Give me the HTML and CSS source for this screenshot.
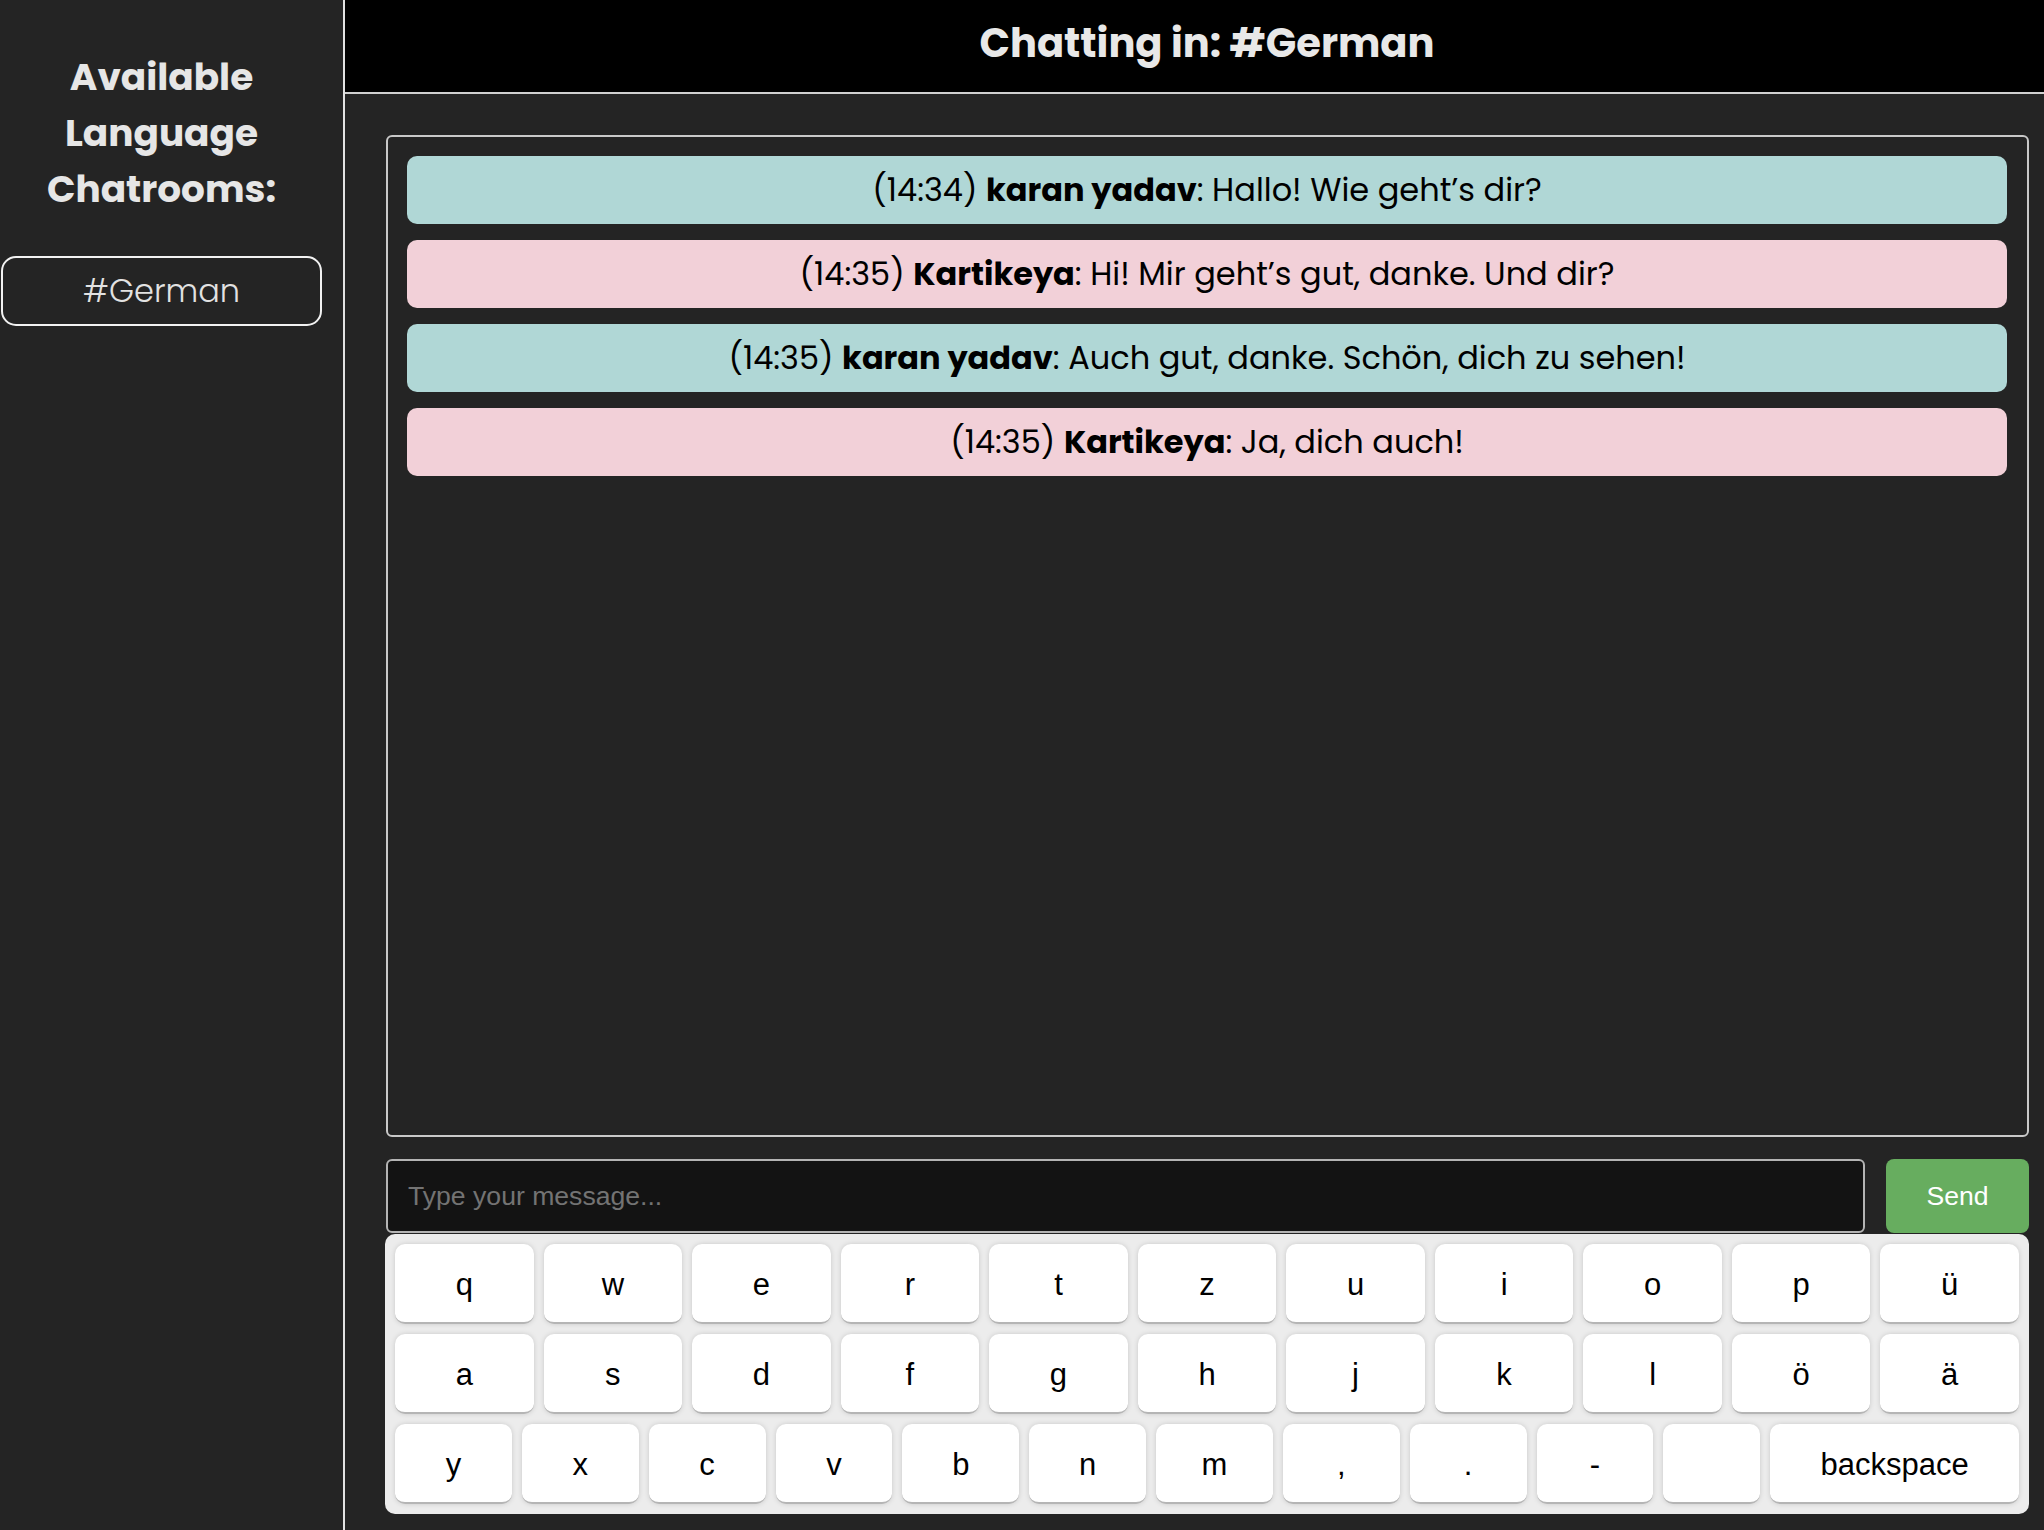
FILE: index.html
```html
<!DOCTYPE html>
<html lang="de">
<head>
<meta charset="utf-8">
<title>Language Chatrooms</title>
<link rel="stylesheet" href="styles.css">
</head>
<body>
<div class="app">
  <aside class="sidebar">
    <h3 class="rooms-title">Available Language Chatrooms:</h3>
    <button class="room">#German</button>
  </aside>
  <main class="main">
    <header class="topbar">
      <h2 class="topbar-title">Chatting in: #German</h2>
    </header>
    <section class="content">
      <div class="messages">
        <div class="msg msg-a">(14:34) <b>karan yadav</b>: Hallo! Wie geht’s dir?</div>
        <div class="msg msg-b">(14:35) <b>Kartikeya</b>: Hi! Mir geht’s gut, danke. Und dir?</div>
        <div class="msg msg-a">(14:35) <b>karan yadav</b>: Auch gut, danke. Schön, dich zu sehen!</div>
        <div class="msg msg-b">(14:35) <b>Kartikeya</b>: Ja, dich auch!</div>
      </div>
      <form class="composer">
        <input class="composer-input" type="text" placeholder="Type your message...">
        <button class="send" type="button">Send</button>
      </form>
      <div class="keyboard">
        <div class="kb-row">
          <span class="key">q</span><span class="key">w</span><span class="key">e</span><span class="key">r</span><span class="key">t</span><span class="key">z</span><span class="key">u</span><span class="key">i</span><span class="key">o</span><span class="key">p</span><span class="key">ü</span>
        </div>
        <div class="kb-row">
          <span class="key">a</span><span class="key">s</span><span class="key">d</span><span class="key">f</span><span class="key">g</span><span class="key">h</span><span class="key">j</span><span class="key">k</span><span class="key">l</span><span class="key">ö</span><span class="key">ä</span>
        </div>
        <div class="kb-row">
          <span class="key">y</span><span class="key">x</span><span class="key">c</span><span class="key">v</span><span class="key">b</span><span class="key">n</span><span class="key">m</span><span class="key">,</span><span class="key">.</span><span class="key">-</span><span class="key key-space"> </span><span class="key key-back">backspace</span>
        </div>
      </div>
    </section>
  </main>
</div>
</body>
</html>
```

FILE: styles.css
```css
* { box-sizing: border-box; }

html, body {
  margin: 0;
  padding: 0;
  height: 100%;
  background: #242424;
}

body {
  font-family: Poppins, "Open Sans", "Noto Sans", sans-serif;
}

.app {
  display: flex;
  height: 1530px;
  background: #242424;
}

/* Sidebar */
.sidebar {
  width: 345px;
  flex: 0 0 345px;
  border-right: 2px solid #e2e2e2;
  padding: 49px 21px 0 1px;
  display: flex;
  flex-direction: column;
}

.rooms-title {
  margin: 0 0 39px 0;
  color: #e6e6e6;
  font-size: 37.44px;
  line-height: 56px;
  font-weight: 700;
  text-align: center;
}

.room {
  height: 70px;
  width: 100%;
  background: transparent;
  border: 2px solid #f2f2f2;
  border-radius: 15px;
  color: #e2e2e2;
  font-family: Poppins, "Open Sans", sans-serif;
  font-size: 32px;
  font-weight: 300;
  line-height: 48px;
  padding: 0;
}

/* Main */
.main {
  flex: 1 1 auto;
  display: flex;
  flex-direction: column;
  min-width: 0;
}

.topbar {
  height: 94px;
  flex: 0 0 94px;
  background: #000;
  border-bottom: 2px solid #d0d0d0;
  padding: 0 15px 0 40px;
  display: flex;
  align-items: center;
  justify-content: center;
}

.topbar-title {
  margin: 0 0 6px 0;
  color: #e8e8e8;
  font-size: 40px;
  font-weight: 700;
  line-height: 56px;
}

.content {
  flex: 1 1 auto;
  display: flex;
  flex-direction: column;
  padding: 41px 15px 16px 40px;
  min-height: 0;
}

.messages {
  flex: 1 1 auto;
  border: 2px solid #c8c8c8;
  border-radius: 6px;
  padding: 19px 20px 19px 19px;
  display: flex;
  flex-direction: column;
  gap: 16px;
  margin-left: 1px;
}

.msg {
  border-radius: 10px;
  padding: 10px 20px;
  text-align: center;
  color: #000;
  font-size: 32px;
  line-height: 48px;
}

.msg b { font-weight: 700; }

.msg-a { background: #b0d7d6; }
.msg-b { background: #f2d0d8; }

/* Composer */
.composer {
  margin: 22px 0 1px 1px;
  display: flex;
  gap: 21px;
  height: 74px;
}

.composer-input {
  flex: 1 1 auto;
  height: 74px;
  background: #131313;
  border: 2px solid #b4b4b4;
  border-radius: 6px;
  padding: 0 20px;
  color: #eee;
  font-family: "Liberation Sans", Arial, sans-serif;
  font-size: 26.6px;
  outline: none;
}

.composer-input::placeholder {
  color: #737373;
}

.send {
  flex: 0 0 143px;
  height: 74px;
  background: #67ad5f;
  border: none;
  border-radius: 8px;
  color: #fff;
  font-family: "Liberation Sans", Arial, sans-serif;
  font-size: 26.6px;
}

/* Keyboard */
.keyboard {
  background: #ececec;
  border-radius: 10px;
  padding: 10px;
  display: flex;
  flex-direction: column;
  gap: 10px;
  font-family: "Liberation Sans", Arial, sans-serif;
}

.kb-row {
  display: flex;
  gap: 10px;
}

.key {
  flex: 1 1 0;
  height: 80px;
  background: #fff;
  border-radius: 10px;
  border-bottom: 2px solid #b5b5b5;
  box-shadow: 0 0 6px -2px rgba(0, 0, 0, 0.3);
  display: flex;
  align-items: center;
  justify-content: center;
  color: #000;
  font-size: 31px;
  padding-top: 3px;
}

.key-space { flex: 0.828 1 0; }
.key-back { flex: 2.13 1 0; }
```
